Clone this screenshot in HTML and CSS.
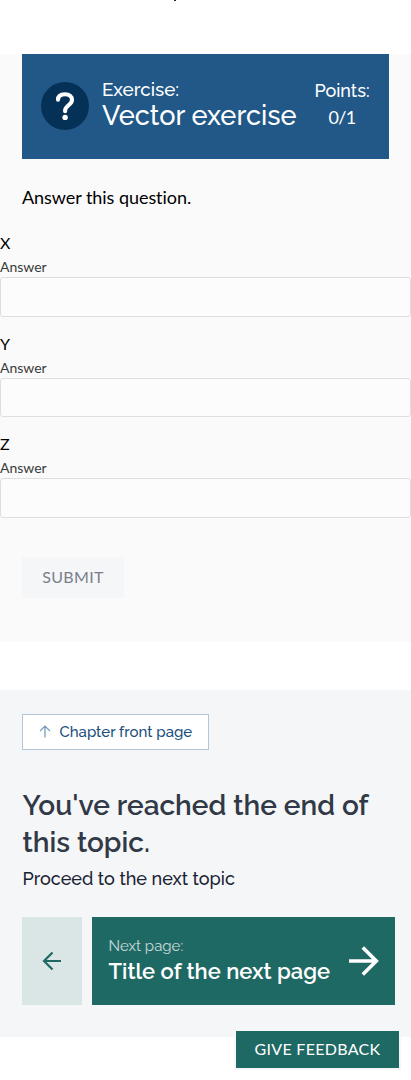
FILE: index.html
```html
<!DOCTYPE html>
<html lang="en">
<head>
<meta charset="utf-8">
<meta name="viewport" content="width=device-width, initial-scale=1">
<title>Vector exercise</title>
<link rel="stylesheet" href="styles.css">
</head>
<body>
<div class="lead"><span class="lead-mark"></span></div>
<main class="exercise">
  <header class="exercise-header">
    <svg class="badge" viewBox="0 0 48 48" aria-hidden="true">
      <circle cx="24" cy="24" r="24" fill="#063157"/>
      <path d="M17 17.8C17 14 19.8 12.2 24 12.2C28.4 12.2 31 14.5 31 17.9C31 22.6 24.1 23.8 24.1 28.4V29.2" fill="none" stroke="#fff" stroke-width="4.1" stroke-linecap="round"/>
      <circle cx="24.1" cy="35.4" r="2.7" fill="#fff"/>
    </svg>
    <div class="titles"><div class="kind">Exercise:</div><h1 class="title">Vector exercise</h1></div>
    <div class="points"><div class="points-label">Points:</div><div class="score">0/1</div></div>
  </header>
  <p class="question">Answer this question.</p>
  <div class="field"><div class="axis">X</div><label class="label" for="x">Answer</label><input class="input" id="x"></div>
  <div class="field"><div class="axis">Y</div><label class="label" for="y">Answer</label><input class="input input-short" id="y"></div>
  <div class="field"><div class="axis">Z</div><label class="label" for="z">Answer</label><input class="input" id="z"></div>
  <button class="submit" disabled>SUBMIT</button>
</main>
<nav class="next-section">
  <a class="chapter"><svg class="up" viewBox="0 0 12 14" aria-hidden="true"><path d="M6 12.5V1.5M1 6.2L6 1.2L11 6.2" fill="none" stroke="#6e96b8" stroke-width="1.2"/></svg><span class="chapter-text">Chapter front page</span></a>
  <h2 class="end-title">You've reached the end of<br>this topic.</h2>
  <p class="proceed">Proceed to the next topic</p>
  <div class="pager">
    <a class="previous"><svg class="left" viewBox="0 0 20 20" aria-hidden="true"><path d="M19 10H2.5M10.5 1.5L2 10L10.5 18.5" fill="none" stroke="#1f6964" stroke-width="2.2"/></svg></a>
    <a class="next">
      <span class="next-copy"><span class="next-label">Next page:</span><span class="next-title">Title of the next page</span></span>
      <svg class="right" viewBox="0 0 30 30" aria-hidden="true"><path d="M0 15H27M13.8 1.5L27.3 15L13.8 28.5" fill="none" stroke="#fff" stroke-width="3.6"/></svg>
    </a>
  </div>
</nav>
<button class="feedback">GIVE FEEDBACK</button>
</body>
</html>
```
FILE: styles.css
```css
* { box-sizing: border-box; }
body { margin: 0; height: 1080px; overflow: hidden; background: #fff; color: #000; font-family: Lato, sans-serif; font-variant-ligatures: none; }
h1, h2, p { margin: 0; font-weight: 400; }
.lead { height: 54px; }
.lead-mark { display: block; width: 2px; height: 1px; margin-left: 174px; background: #222; }
.exercise { height: 588px; background: #fafafa; }
.exercise-header { display: flex; height: 105px; margin: 0 22px; padding: 0 19px; background: #215887; color: #fff; font-family: Raleway, Lato, sans-serif; }
.badge { flex: none; width: 48px; height: 48px; margin-top: 28px; }
.titles { flex: none; width: 200px; margin: 24px 0 0 13px; white-space: nowrap; }
.kind { font-size: 18.8px; line-height: 23px; font-weight: 500; }
.title { font-size: 27.2px; line-height: 28px; font-weight: 500; }
.points { flex: none; width: 56px; margin-top: 24px; margin-left: 12px; font-size: 18px; white-space: nowrap; text-align: center; }
.points-label { line-height: 25px; font-weight: 500; }
.score { font-family: Lato, sans-serif; line-height: 29px; letter-spacing: -.6px; }
.question { padding: 25px 22px 0; font-size: 18px; line-height: 26px; height: 71px; letter-spacing: -.05px; }
.field { height: 100.5px; }
.axis { height: 27px; font-size: 16px; line-height: 26px; }
.label { display: block; height: 20px; font-size: 14px; line-height: 20px; color: #3b3b3b; }
.input { display: block; width: 100%; height: 40px; border: 1px solid #dedede; border-radius: 3px; background: #fcfcfc; }
.input-short { height: 39px; }
.submit { display: block; width: 102px; height: 41px; margin: 25.5px 0 0 22px; padding: 0 0 2px; border: 0; background: #f5f6f8; color: #7b7f8b; font: 16px Lato, sans-serif; letter-spacing: .35px; }
.next-section { height: 347px; margin-top: 48px; padding: 24px 16px 0 22px; background: #f5f6f8; font-family: Raleway, Lato, sans-serif; }
.chapter { display: flex; align-items: center; width: 187px; height: 36px; padding-left: 16px; border: 1px solid #b3c7d8; background: #fff; color: #1a4f7e; }
.up { width: 12px; height: 14px; margin-right: 8.5px; }
.chapter-text { font-size: 15px; font-weight: 500; white-space: nowrap; }
.end-title { margin: 37px 0 0 .5px; font-size: 28px; line-height: 37px; font-weight: 600; color: #313947; white-space: nowrap; }
.proceed { margin: 5px 0 0 .5px; font-size: 18px; line-height: 26px; font-weight: 500; color: #1a2333; white-space: nowrap; }
.pager { display: flex; gap: 10px; height: 88px; margin-top: 25px; }
.previous { display: flex; align-items: center; justify-content: center; width: 60px; background: #dae6e5; }
.left { width: 20px; height: 20px; }
.next { display: flex; align-items: center; justify-content: space-between; width: 303px; padding: 0 16px 0 16.5px; background: #1f6964; color: #fff; }
.next-copy { display: flex; flex-direction: column; margin-top: -6px; white-space: nowrap; }
.next-label { font-size: 15px; line-height: 25px; opacity: .75; }
.next-title { font-size: 22px; line-height: 24px; font-weight: 600; }
.right { width: 30px; height: 30px; flex: none; }
.feedback { position: fixed; left: 234px; top: 1029px; width: 167px; height: 41px; padding: 0 0 2px; border: 2px solid #f5f6f8; background: #1f6964; color: #fff; font: 16px Lato, sans-serif; letter-spacing: .3px; }
```
